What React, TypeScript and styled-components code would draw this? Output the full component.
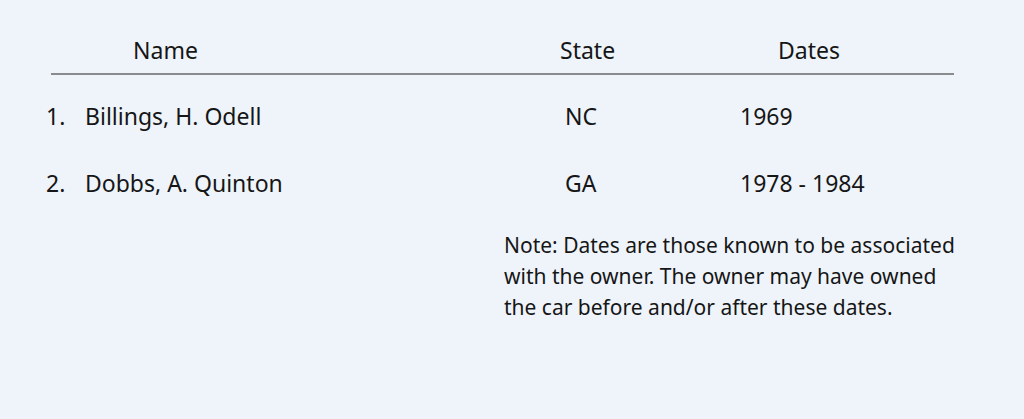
import React from "react";
import styled, { createGlobalStyle } from "styled-components";

const GlobalStyle = createGlobalStyle`
  html, body {
    margin: 0;
    padding: 0;
    background: #eff4fb;
  }
  body {
    font-family: "Noto Sans", "Open Sans", "DejaVu Sans", sans-serif;
    color: #161616;
  }
`;

const owners = [
  { name: "Billings, H. Odell", state: "NC", dates: "1969" },
  { name: "Dobbs, A. Quinton", state: "GA", dates: "1978 - 1984" },
];

const Page = styled.div`
  width: 1024px;
  height: 419px;
  padding: 36px 0 0 51px;
  box-sizing: border-box;
  font-size: 23px;
  line-height: 28px;
`;

const Table = styled.div`
  width: 903px;
`;

const HeaderRow = styled.div`
  display: grid;
  grid-template-columns: 489px 140px 274px;
  padding-bottom: 9px;
  border-bottom: 2px solid #8a8b8d;
`;

const Row = styled.div`
  display: grid;
  grid-template-columns: 489px 140px 274px;
  margin-top: 27px;

  & + & {
    margin-top: 39px;
  }
`;

const Cell = styled.div<{ $pad: number }>`
  padding-left: ${({ $pad }) => $pad}px;
  white-space: nowrap;
`;

const NameCell = styled.div`
  display: flex;
  margin-left: -5px;
`;

const Num = styled.span`
  width: 39px;
`;

const Note = styled.p`
  width: 456px;
  margin: 33px 0 0 453px;
  font-size: 21px;
  line-height: 31px;
`;

const App = () => {
  return (
    <>
      <GlobalStyle />
      <Page>
        <Table>
          <HeaderRow>
            <Cell $pad={82}>Name</Cell>
            <Cell $pad={20}>State</Cell>
            <Cell $pad={98}>Dates</Cell>
          </HeaderRow>
          {owners.map((o, i) => (
            <Row key={o.name}>
              <NameCell>
                <Num>{i + 1}.</Num>
                {o.name}
              </NameCell>
              <Cell $pad={25}>{o.state}</Cell>
              <Cell $pad={60}>{o.dates}</Cell>
            </Row>
          ))}
          <Note>
            Note: Dates are those known to be associated with the owner. The
            owner may have owned the car before and/or after these dates.
          </Note>
        </Table>
      </Page>
    </>
  );
};

export default App;
